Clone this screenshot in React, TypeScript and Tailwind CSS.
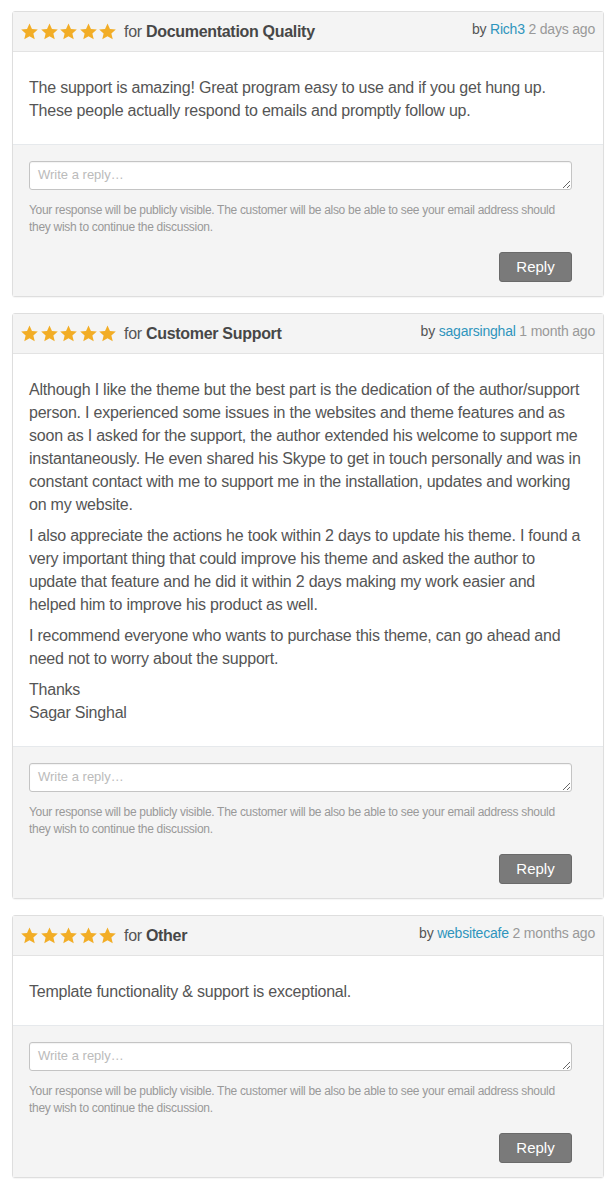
import type { ReactNode } from "react";

/* ---------- Data ---------- */
interface Review {
  category: string;
  author: string;
  when: string;
  body: ReactNode;
}

const reviews: Review[] = [
  {
    category: "Documentation Quality",
    author: "Rich3",
    when: "2 days ago",
    body: (
      <p>
        The support is amazing! Great program easy to use and if you get hung up.
        These people actually respond to emails and promptly follow up.
      </p>
    ),
  },
  {
    category: "Customer Support",
    author: "sagarsinghal",
    when: "1 month ago",
    body: (
      <>
        <p>
          Although I like the theme but the best part is the dedication of the author/support
          person. I experienced some issues in the websites and theme features and as soon as I
          asked for the support, the author extended his welcome to support me instantaneously. He
          even shared his Skype to get in touch personally and was in constant contact with me to
          support me in the installation, updates and working on my website.
        </p>
        <p>
          I also appreciate the actions he took within 2 days to update his theme. I found a very
          important thing that could improve his theme and asked the author to update that feature
          and he did it within 2 days making my work easier and helped him to improve his product
          as well.
        </p>
        <p>
          I recommend everyone who wants to purchase this theme, can go ahead and need not to worry
          about the support.
        </p>
        <p>
          Thanks
          <br />
          Sagar Singhal
        </p>
      </>
    ),
  },
  {
    category: "Other",
    author: "websitecafe",
    when: "2 months ago",
    body: <p>Template functionality &amp; support is exceptional.</p>,
  },
];

/* ---------- Pieces ---------- */
function Star() {
  return (
    <svg viewBox="0 0 24 24" className="h-[19px] w-[19px]" fill="#f2ad26">
      <path d="M12 1.8l3.1 6.9 7.4.7-5.6 5 1.7 7.4L12 18l-6.6 3.8 1.7-7.4-5.6-5 7.4-.7z" />
    </svg>
  );
}

function ReviewCard({ review }: { review: Review }) {
  return (
    <div className="rounded-[3px] border border-[#dedede] bg-white shadow-[0_1px_1px_rgba(0,0,0,0.04)]">
      <div className="flex h-10 items-center justify-between border-b border-[#e3e3e3] bg-[#f4f4f4] pl-[7px] pr-2">
        <div className="flex items-center">
          <div className="flex gap-[0.5px]">
            <Star />
            <Star />
            <Star />
            <Star />
            <Star />
          </div>
          <span className="ml-[7px] text-[16px] tracking-[-0.3px] text-[#555]">
            for <span className="font-bold text-[#474747]">{review.category}</span>
          </span>
        </div>
        <div className="-mt-1 text-[14px] tracking-[-0.2px] text-[#999]">
          <span className="text-[#555]">by </span>
          <a className="text-[#2f95bd]">{review.author}</a> {review.when}
        </div>
      </div>
      <div className="space-y-[8px] pb-[22px] pl-4 pr-[19px] pt-[24px] text-[16px] leading-[23px] tracking-[-0.22px] text-[#555]">
        {review.body}
      </div>
      <div className="border-t border-[#e6e9ec] bg-[#f4f4f4] pb-[14px] pl-4 pr-[31px] pt-4">
        <textarea
          rows={1}
          placeholder="Write a reply…"
          className="block h-[29px] w-full resize-y rounded-[3px] border border-[#c4c4c4] bg-white px-2 py-[4px] text-[13px] leading-[18px] text-[#555] shadow-[inset_0_1px_1px_rgba(0,0,0,0.05)] placeholder:text-[#bbb]"
        />
        <p className="mt-[12px] text-[12px] leading-[17px] tracking-[-0.3px] text-[#999]">
          Your response will be publicly visible. The customer will be also be able to see your
          email address should they wish to continue the discussion.
        </p>
        <div className="mt-4 flex justify-end">
          <button className="h-[30px] w-[73px] rounded-[3px] border border-[#6a6a6a] bg-[#7a7a7a] text-[15px] text-white">
            Reply
          </button>
        </div>
      </div>
    </div>
  );
}

export default function App() {
  return (
    <div
      className="min-h-[1186px] bg-white px-3 pb-2 pt-[11px]"
      style={{ fontFamily: '"Liberation Sans", Arial, Helvetica, sans-serif' }}
    >
      <div className="flex flex-col gap-4">
        {reviews.map((r) => (
          <ReviewCard key={r.author} review={r} />
        ))}
      </div>
    </div>
  );
}
